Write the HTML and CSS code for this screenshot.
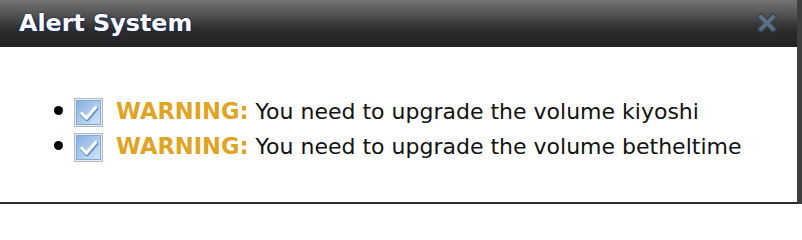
FILE: index.html
```html
<!DOCTYPE html>
<html lang="en">
<head>
<meta charset="utf-8">
<title>Alert System</title>
<link rel="stylesheet" href="styles.css">
</head>
<body>
<div class="dialog">
  <div class="header">
    <h1 class="title">Alert System</h1>
    <button class="close" aria-label="Close">
      <svg width="20" height="20" viewBox="0 0 20 20">
        <path d="M4 4 L16 16 M16 4 L4 16" stroke="#3a4048" stroke-width="7" stroke-linecap="square" fill="none" opacity="0.85"/>
        <path d="M4 4 L16 16 M16 4 L4 16" stroke="#5d7894" stroke-width="4" stroke-linecap="square" fill="none"/>
      </svg>
    </button>
  </div>
  <div class="content">
    <ul class="alerts">
      <li class="alert">
        <svg class="check" width="29" height="29" viewBox="0 0 29 29">
          <defs>
            <linearGradient id="g1" x1="0" y1="0" x2="1" y2="1">
              <stop offset="0" stop-color="#86b0e2"/>
              <stop offset="1" stop-color="#d3e3f6"/>
            </linearGradient>
          </defs>
          <rect x="0.5" y="0.5" width="28" height="28" fill="#e9ecf0" stroke="#b3b9c3"/>
          <rect x="2.5" y="2.5" width="24" height="24" fill="url(#g1)" stroke="#85a9d6"/>
          <polyline points="8,15.5 12.5,20 21.5,9.5" fill="none" stroke="#5f92cc" stroke-width="4.5" stroke-linecap="round" stroke-linejoin="round" transform="translate(0.5,1)"/>
          <polyline points="8,15.5 12.5,20 21.5,9.5" fill="none" stroke="#ffffff" stroke-width="3.2" stroke-linecap="round" stroke-linejoin="round"/>
        </svg>
        <span class="text"><strong class="label">WARNING:</strong> You need to upgrade the volume kiyoshi</span>
      </li>
      <li class="alert">
        <svg class="check" width="29" height="29" viewBox="0 0 29 29">
          <defs>
            <linearGradient id="g2" x1="0" y1="0" x2="1" y2="1">
              <stop offset="0" stop-color="#86b0e2"/>
              <stop offset="1" stop-color="#d3e3f6"/>
            </linearGradient>
          </defs>
          <rect x="0.5" y="0.5" width="28" height="28" fill="#e9ecf0" stroke="#b3b9c3"/>
          <rect x="2.5" y="2.5" width="24" height="24" fill="url(#g2)" stroke="#85a9d6"/>
          <polyline points="8,15.5 12.5,20 21.5,9.5" fill="none" stroke="#5f92cc" stroke-width="4.5" stroke-linecap="round" stroke-linejoin="round" transform="translate(0.5,1)"/>
          <polyline points="8,15.5 12.5,20 21.5,9.5" fill="none" stroke="#ffffff" stroke-width="3.2" stroke-linecap="round" stroke-linejoin="round"/>
        </svg>
        <span class="text"><strong class="label">WARNING:</strong> You need to upgrade the volume betheltime</span>
      </li>
    </ul>
  </div>
</div>
</body>
</html>
```

FILE: styles.css
```css
html, body {
  margin: 0;
  padding: 0;
  background: #ffffff;
}

.dialog {
  width: 797px;
  height: 202px;
  border-right: 5px solid #3e3e3e;
  border-bottom: 2px solid #2e2e2e;
  display: flex;
  flex-direction: column;
  font-family: "DejaVu Sans", Verdana, sans-serif;
}

.header {
  height: 47px;
  flex: none;
  display: flex;
  align-items: center;
  justify-content: space-between;
  padding: 0 20px 0 19px;
  background: linear-gradient(to bottom, #747474 0%, #505050 33%, #2d2d2d 62%, #222222 100%);
}

.title {
  margin: 0;
  font-size: 23.8px;
  font-weight: bold;
  color: #ffffff;
  text-shadow: 0 0 2px #14245a, 1px 1px 1px #1c2c5c;
  line-height: 1;
  padding-top: 1px;
}

.close {
  border: 0;
  padding: 0;
  margin: 0 0 1px 0;
  background: none;
  width: 20px;
  height: 20px;
  display: flex;
  opacity: 0.85;
  filter: blur(0.4px);
}

.content {
  flex: 1;
  padding-top: 47px;
}

.alerts {
  list-style: none;
  margin: 0;
  padding: 0 0 0 54px;
}

.alert {
  display: flex;
  align-items: center;
  height: 35px;
  font-size: 22px;
  color: #111111;
}

.alert::before {
  content: "";
  width: 9px;
  height: 9px;
  border-radius: 50%;
  background: #000000;
  margin-right: 11px;
  margin-top: -3px;
  flex: none;
}

.check {
  flex: none;
  margin-right: 13px;
  margin-top: 1px;
}

.text {
  white-space: nowrap;
  line-height: 35px;
}

.label {
  color: #dfa424;
  font-weight: bold;
  font-size: 22.6px;
}
```
